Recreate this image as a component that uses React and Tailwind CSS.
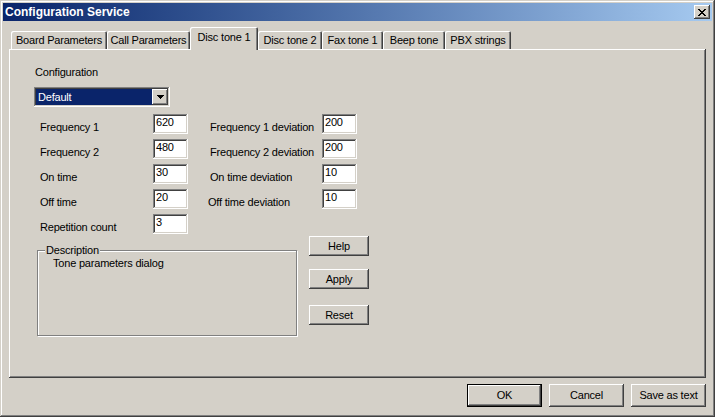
import React from 'react';

const raised =
  'shadow-[inset_-1px_-1px_#404040,inset_1px_1px_#ffffff,inset_-2px_-2px_#808080,inset_2px_2px_#d4d0c8]';
const sunken =
  'shadow-[inset_-1px_-1px_#ffffff,inset_1px_1px_#808080,inset_-2px_-2px_#d4d0c8,inset_2px_2px_#404040]';

const tabs = [
  { label: 'Board Parameters', w: 'w-[96px]' },
  { label: 'Call Parameters', w: 'w-[83px]' },
  { label: 'Disc tone 1', w: 'w-[68px]', active: true },
  { label: 'Disc tone 2', w: 'w-[64px]' },
  { label: 'Fax tone 1', w: 'w-[61px]' },
  { label: 'Beep tone', w: 'w-[62px]' },
  { label: 'PBX strings', w: 'w-[66px]' },
];

const rows = [
  ['Frequency 1', '620', 'Frequency 1 deviation', '200'],
  ['Frequency 2', '480', 'Frequency 2 deviation', '200'],
  ['On time', '30', 'On time deviation', '10'],
  ['Off time', '20', 'Off time deviation', '10'],
  ['Repetition count', '3'],
];

const Field = ({ value }) => (
  <div
    className={`w-[35px] h-[20px] bg-white pl-[3px] pt-[2px] leading-[13px] text-black ${sunken}`}
  >
    {value}
  </div>
);

const Button = ({ children, className = '' }) => (
  <div
    className={`flex items-center justify-center text-black ${raised} ${className}`}
  >
    {children}
  </div>
);

const CloseIcon = () => (
  <svg width="8" height="7" viewBox="0 0 8 7" shapeRendering="crispEdges">
    <path
      d="M0 0h2v1h-2zM6 0h2v1h-2zM1 1h2v1h-2zM5 1h2v1h-2zM2 2h4v1h-4zM3 3h2v1h-2zM2 4h4v1h-4zM1 5h2v1h-2zM5 5h2v1h-2zM0 6h2v1h-2zM6 6h2v1h-2z"
      fill="#000"
    />
  </svg>
);

const ArrowIcon = () => (
  <svg width="7" height="4" viewBox="0 0 7 4" shapeRendering="crispEdges">
    <path d="M0 0h7v1h-7zM1 1h5v1h-5zM2 2h3v1h-3zM3 3h1v1h-1z" fill="#000" />
  </svg>
);

export default function App() {
  return (
    <div
      className={`w-[715px] h-[417px] p-[3px] bg-[#d4d0c8] flex flex-col text-[11px] tracking-[-0.2px] text-black font-['Liberation_Sans',Arial,sans-serif] shadow-[inset_-1px_-1px_#404040,inset_1px_1px_#d4d0c8,inset_-2px_-2px_#808080,inset_2px_2px_#ffffff]`}
    >
      {/* title bar */}
      <div className="h-[18px] flex items-center justify-between pl-[2px] pr-[2px] bg-linear-to-r from-[#0a246a] to-[#a6caf0]">
        <span className="text-white font-bold text-[12px] tracking-[0px] leading-[18px]">
          Configuration Service
        </span>
        <div
          className={`w-[16px] h-[14px] bg-[#d4d0c8] flex items-center justify-center ${raised}`}
        >
          <CloseIcon />
        </div>
      </div>

      {/* tabs */}
      <div className="mt-[6px] ml-[8px] h-[22px] flex items-end">
        {tabs.map((t) =>
          t.active ? (
            <div
              key={t.label}
              className={`${t.w} h-[23px] -mb-[1px] relative z-10 bg-[#d4d0c8] rounded-t-[2px] flex items-start justify-center pt-[4px] leading-[13px] shadow-[inset_1px_1px_#ffffff,inset_-1px_0_#404040,inset_-2px_0_#808080]`}
            >
              {t.label}
            </div>
          ) : (
            <div
              key={t.label}
              className={`${t.w} h-[18px] rounded-t-[2px] flex items-start justify-center pt-[3px] leading-[13px] shadow-[inset_1px_1px_#ffffff,inset_-1px_0_#404040,inset_-2px_0_#808080]`}
            >
              {t.label}
            </div>
          )
        )}
      </div>

      {/* tab panel */}
      <div
        className={`ml-[6px] w-[697px] h-[329px] flex flex-col pl-[25px] shadow-[inset_-1px_-1px_#404040,inset_1px_1px_#ffffff,inset_-2px_-2px_#808080]`}
      >
        <div className="mt-[17px] ml-[1px] leading-[13px]">Configuration</div>

        <div className={`mt-[8px] w-[136px] h-[20px] p-[2px] flex ${sunken}`}>
          <div className="flex-1 bg-[#0a246a] text-white leading-[16px] pl-[2px]">
            Default
          </div>
          <div
            className={`w-[16px] h-[16px] bg-[#d4d0c8] flex items-center justify-center ${raised}`}
          >
            <ArrowIcon />
          </div>
        </div>

        <div className="mt-[7px] ml-[6px] flex flex-col">
          {rows.map((r, i) => (
            <div
              key={r[0]}
              className={`flex items-end h-[20px] ${i < rows.length - 1 ? 'mb-[5px]' : ''}`}
            >
              <span className="w-[113px] leading-[13px]">{r[0]}</span>
              <Field value={r[1]} />
              {r[2] && (
                <>
                  <span
                    className={`leading-[13px] ${r[2] === 'Off time deviation' ? 'ml-[20px] w-[114px]' : 'ml-[22px] w-[112px]'}`}
                  >
                    {r[2]}
                  </span>
                  <Field value={r[3]} />
                </>
              )}
            </div>
          ))}
        </div>

        <div className="mt-[2px] ml-[3px] flex items-start">
          <div className="relative mt-[14px] w-[260px] h-[86px] border border-[#808080] shadow-[inset_1px_1px_#ffffff,1px_1px_#ffffff]">
            <span className="absolute left-[7px] -top-[7px] px-[1px] bg-[#d4d0c8] leading-[13px]">
              Description
            </span>
            <div className="mt-[6px] ml-[15px] leading-[13px]">
              Tone parameters dialog
            </div>
          </div>
          <div className="ml-[12px] flex flex-col">
            <Button className="w-[60px] h-[20px]">Help</Button>
            <Button className="mt-[13px] w-[60px] h-[20px]">Apply</Button>
            <Button className="mt-[16px] w-[60px] h-[20px]">Reset</Button>
          </div>
        </div>
      </div>

      {/* dialog buttons */}
      <div className="mt-[6px] mr-[6px] flex justify-end gap-[7px]">
        <div className="w-[75px] h-[23px] flex items-center justify-center shadow-[inset_-1px_-1px_#000000,inset_1px_1px_#000000,inset_-2px_-2px_#404040,inset_2px_2px_#ffffff,inset_-3px_-3px_#808080]">
          OK
        </div>
        <Button className="w-[75px] h-[23px]">Cancel</Button>
        <Button className="w-[75px] h-[23px]">Save as text</Button>
      </div>
    </div>
  );
}
